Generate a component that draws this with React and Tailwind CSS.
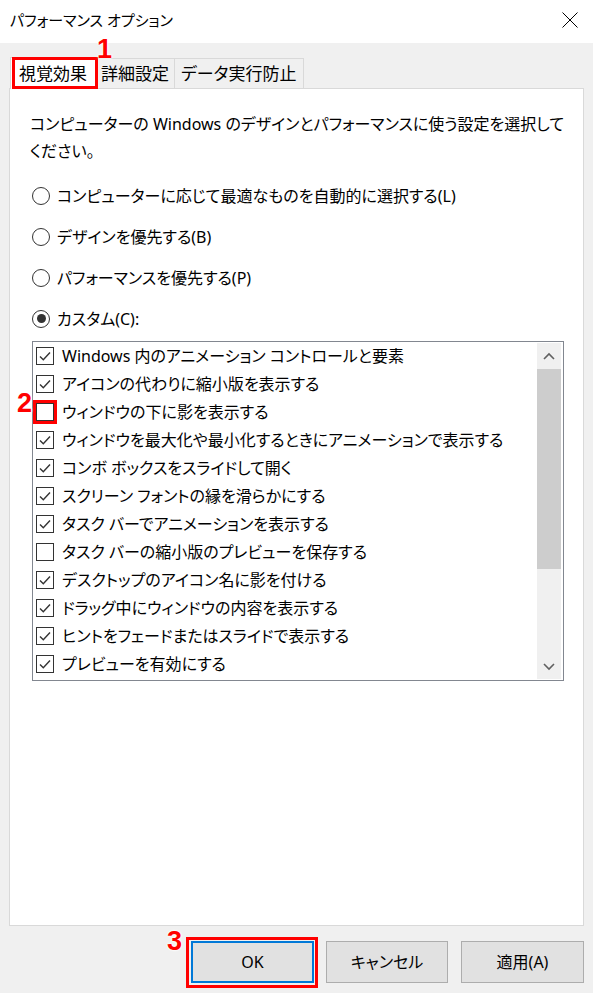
import React from 'react';

const items = [
  { label: 'Windows 内のアニメーション コントロールと要素', checked: true },
  { label: 'アイコンの代わりに縮小版を表示する', checked: true },
  { label: 'ウィンドウの下に影を表示する', checked: false, mark: true },
  { label: 'ウィンドウを最大化や最小化するときにアニメーションで表示する', checked: true },
  { label: 'コンボ ボックスをスライドして開く', checked: true },
  { label: 'スクリーン フォントの縁を滑らかにする', checked: true },
  { label: 'タスク バーでアニメーションを表示する', checked: true },
  { label: 'タスク バーの縮小版のプレビューを保存する', checked: false },
  { label: 'デスクトップのアイコン名に影を付ける', checked: true },
  { label: 'ドラッグ中にウィンドウの内容を表示する', checked: true },
  { label: 'ヒントをフェードまたはスライドで表示する', checked: true },
  { label: 'プレビューを有効にする', checked: true },
];

const radios = [
  { label: 'コンピューターに応じて最適なものを自動的に選択する(L)', on: false },
  { label: 'デザインを優先する(B)', on: false },
  { label: 'パフォーマンスを優先する(P)', on: false },
  { label: 'カスタム(C):', on: true },
];

function Num({ n, className }) {
  return (
    <span
      className={
        'absolute font-["Liberation_Sans",sans-serif] font-bold text-[27px] leading-none text-[#ff0000] [text-shadow:0_0_2px_#fff,0_0_2px_#fff,0_0_3px_#fff] ' +
        className
      }
    >
      {n}
    </span>
  );
}

function Checkbox({ checked }) {
  return (
    <div className="w-[18px] h-[18px] border border-[#333] bg-white flex items-center justify-center">
      {checked && (
        <svg width="14" height="14" viewBox="0 0 14 14">
          <path d="M2 7.5 L5.3 10.8 L12 3.6" fill="none" stroke="#333" strokeWidth="1.4" />
        </svg>
      )}
    </div>
  );
}

export default function App() {
  return (
    <div className="relative w-[593px] h-[993px] bg-[#f0f0f0] flex flex-col text-black font-['Noto_Sans','Noto_Sans_CJK_JP',sans-serif] [font-feature-settings:'palt'] overflow-hidden">
      {/* title bar */}
      <div className="h-[43px] bg-white flex items-center justify-between pl-[10px] pr-[15px]">
        <span className="text-[15px] leading-none -mt-[2px]">パフォーマンス オプション</span>
        <svg width="16" height="16" viewBox="0 0 16 16" className="-mt-[4px]">
          <path d="M0.5 0.5 L15.5 15.5 M15.5 0.5 L0.5 15.5" stroke="#000" strokeWidth="1" />
        </svg>
      </div>

      {/* tabs */}
      <div className="relative flex items-end pl-[10px] pt-[13px] h-[45px]">
        <div className="relative z-10 h-[32px] -mb-px px-[8px] bg-white border border-b-0 border-[#d9d9d9] flex items-center text-[17px]">
          視覚効果
          <div className="absolute left-[1px] -top-[1px] w-[86px] h-[32px] border-[3px] border-[#ff0000]" />
          <Num n="1" className="left-[86px] -top-[22px]" />
        </div>
        <div className="h-[30px] px-[5px] border border-l-0 border-b-0 border-[#d9d9d9] flex items-center text-[17px]">
          詳細設定
        </div>
        <div className="h-[30px] px-[6px] border border-l-0 border-b-0 border-[#d9d9d9] flex items-center text-[17px]">
          データ実行防止
        </div>
      </div>

      {/* panel */}
      <div className="ml-[9px] w-[575px] h-[838px] bg-white border border-[#d9d9d9] pt-[22px]">
        <p className="pl-[20px] text-[16px] leading-[27px] whitespace-nowrap">
          コンピューターの Windows のデザインとパフォーマンスに使う設定を選択して
          <br />
          ください。
        </p>

        <div className="mt-[10px] flex flex-col">
          {radios.map((r) => (
            <div key={r.label} className="h-[41px] flex items-center pl-[22px] text-[16px]">
              <div className="w-[18px] h-[18px] rounded-full border border-[#333] flex items-center justify-center">
                {r.on && <div className="w-[9px] h-[9px] rounded-full bg-[#333]" />}
              </div>
              <span className="ml-[7px]">{r.label}</span>
            </div>
          ))}
        </div>

        {/* list */}
        <div className="relative mt-[2px] ml-[22px] w-[532px] h-[340px] border border-[#828790] flex">
          <div className="flex-1 flex flex-col">
            {items.map((it) => (
              <div key={it.label} className="h-[28px] flex items-center pl-[3px] text-[16px] whitespace-nowrap">
                <div className="relative">
                  <Checkbox checked={it.checked} />
                  {it.mark && (
                    <>
                      <div className="absolute -left-[3px] -top-[3px] w-[24px] h-[24px] border-[3px] border-[#ff0000]" />
                      <Num n="2" className="-left-[19px] -top-[13px]" />
                    </>
                  )}
                </div>
                <span className="ml-[8px]">{it.label}</span>
              </div>
            ))}
          </div>
          <div className="w-[24px] my-[1px] mr-[2px] bg-[#f0f0f0] flex flex-col">
            <div className="h-[26px] flex items-center justify-center">
              <svg width="12" height="8" viewBox="0 0 12 8">
                <path d="M1 7 L6 2 L11 7" fill="none" stroke="#606060" strokeWidth="1.6" />
              </svg>
            </div>
            <div className="h-[200px] bg-[#cdcdcd]" />
            <div className="flex-1" />
            <div className="h-[25px] flex items-center justify-center">
              <svg width="12" height="8" viewBox="0 0 12 8">
                <path d="M1 1 L6 6 L11 1" fill="none" stroke="#606060" strokeWidth="1.6" />
              </svg>
            </div>
          </div>
        </div>
      </div>

      {/* buttons */}
      <div className="mt-[15px] flex justify-end pr-[9px] gap-[12px]">
        <div className="relative">
          <button className="w-[123px] h-[42px] bg-[#e1e1e1] border-2 border-[#0078d7] text-[16px]">
            OK
          </button>
          <div className="absolute -left-[5px] -top-[4px] w-[132px] h-[51px] border-[3px] border-[#ff0000]" />
          <Num n="3" className="-left-[24px] -top-[13px]" />
        </div>
        <button className="w-[122px] h-[42px] bg-[#e1e1e1] border border-[#adadad] text-[16px]">
          キャンセル
        </button>
        <button className="w-[123px] h-[42px] bg-[#e1e1e1] border border-[#adadad] text-[16px] ml-px">
          適用(A)
        </button>
      </div>
    </div>
  );
}
